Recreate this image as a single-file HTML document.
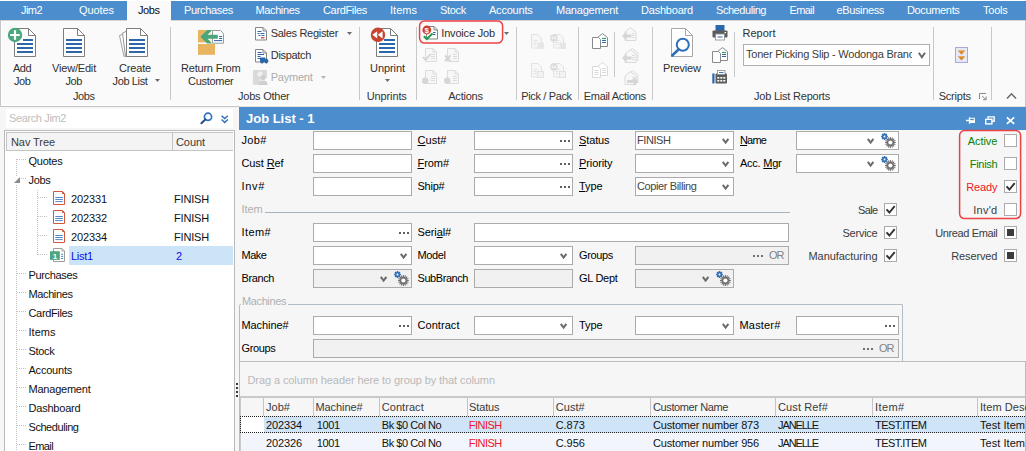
<!DOCTYPE html>
<html lang="en"><head><meta charset="utf-8"><title>Jim2 - Job List</title>
<style>
html,body{margin:0;padding:0}
body{width:1026px;height:451px;overflow:hidden;position:relative;background:#f6f6f6;font-family:"Liberation Sans",sans-serif;font-size:11px;color:#1e1e1e}
div,svg,span.t{position:absolute}
span.t{white-space:pre;line-height:14px;height:14px}
svg{overflow:visible}
</style></head>
<body>
<div style="left:0px;top:0px;width:1026px;height:1px;background:#ffffff;"></div>
<div style="left:0px;top:1px;width:1026px;height:19px;background:#4b8dcd;"></div>
<div style="left:127px;top:1px;width:44px;height:20px;background:#fafafa;"></div>
<div style="left:0px;top:20px;width:1026px;height:86px;background:#fafafa;"></div>
<div style="left:0px;top:20px;width:127px;height:1px;background:#d4d4d4;"></div>
<div style="left:171px;top:20px;width:855px;height:1px;background:#d4d4d4;"></div>
<div style="left:0px;top:105px;width:1026px;height:1px;background:#ffffff;"></div>
<div style="left:0px;top:106px;width:239px;height:1px;background:#c4c4c4;"></div>
<div style="left:239px;top:106px;width:787px;height:1px;background:#e4e0dc;"></div>
<div style="left:0px;top:20px;width:1px;height:87px;background:#c6c6c6;"></div>
<div style="left:1px;top:21px;width:1px;height:84px;background:#ffffff;"></div>
<div style="left:1025px;top:20px;width:1px;height:87px;background:#c6c6c6;"></div>
<div style="left:170px;top:27px;width:1px;height:73px;background:#c8c8c8;"></div>
<div style="left:359px;top:27px;width:1px;height:73px;background:#c8c8c8;"></div>
<div style="left:416px;top:27px;width:1px;height:73px;background:#c8c8c8;"></div>
<div style="left:516px;top:27px;width:1px;height:73px;background:#c8c8c8;"></div>
<div style="left:578px;top:27px;width:1px;height:73px;background:#c8c8c8;"></div>
<div style="left:652px;top:27px;width:1px;height:73px;background:#c8c8c8;"></div>
<div style="left:933px;top:27px;width:1px;height:73px;background:#c8c8c8;"></div>
<div style="left:991px;top:27px;width:1px;height:73px;background:#c8c8c8;"></div>
<div style="left:614px;top:32px;width:1px;height:45px;background:#c8c8c8;"></div>
<div style="left:734px;top:32px;width:1px;height:45px;background:#c8c8c8;"></div>
<svg style="left:155px;top:79px" width="5" height="3" viewBox="0 0 5 3"><path d="M0 0h5L2.5 3z" fill="#6a6a6a"/></svg>
<svg style="left:347px;top:31.5px" width="5" height="3" viewBox="0 0 5 3"><path d="M0 0h5L2.5 3z" fill="#6a6a6a"/></svg>
<svg style="left:321px;top:75.5px" width="5" height="3" viewBox="0 0 5 3"><path d="M0 0h5L2.5 3z" fill="#b5b5b5"/></svg>
<svg style="left:385px;top:79px" width="5" height="3" viewBox="0 0 5 3"><path d="M0 0h5L2.5 3z" fill="#6a6a6a"/></svg>
<svg style="left:504px;top:31.5px" width="5" height="3" viewBox="0 0 5 3"><path d="M0 0h5L2.5 3z" fill="#6a6a6a"/></svg>
<svg style="left:419px;top:20px" width="84" height="24" viewBox="0 0 84 24"><rect x="0.6" y="0.9" width="83" height="22.2" rx="5" fill="none" stroke="#ec4246" stroke-width="1.5"/></svg>
<div style="left:743px;top:44px;width:187px;height:22px;background:#ffffff;border:1px solid #b0b0b0;box-sizing:border-box;"></div>
<svg style="left:917.6px;top:51.8px" width="8" height="7" viewBox="0 0 8 7"><path d="M0.8 0.8L3.9 5.3L7 0.8" fill="none" stroke="#6b6b6b" stroke-width="2"/></svg>
<svg style="left:1006px;top:92px" width="11" height="8" viewBox="0 0 11 8"><path d="M1 6.5L5.5 1.8L10 6.5" fill="none" stroke="#6b6b6b" stroke-width="1.6"/></svg>
<svg style="left:979px;top:93px" width="8" height="7" viewBox="0 0 8 7"><path d="M0.5 6V0.5H7" fill="none" stroke="#8a8a8a"/><path d="M3 3l4 3.5M7.2 3.5v3.2h-3.2" fill="none" stroke="#8a8a8a"/></svg>
<svg style="left:14px;top:28px" width="22" height="29" viewBox="0 0 22 29"><path d="M0.5 0.5H14.5L21.5 7.5V28.5H0.5z" fill="#fff" stroke="#7d7d7d"/><path d="M14.5 0.5V7.5H21.5" fill="none" stroke="#7d7d7d"/><rect x="9" y="11" width="10" height="2" fill="#2c66ab"/><rect x="3" y="15" width="16" height="2" fill="#2c66ab"/><rect x="3" y="19" width="16" height="2" fill="#2c66ab"/><rect x="3" y="23" width="16" height="2" fill="#2c66ab"/><circle cx="1" cy="7" r="7.2" fill="#4aa67c"/><path d="M1 2.2V11.8M-3.8 7H5.8" stroke="#fff" stroke-width="2.2"/></svg>
<svg style="left:63px;top:28px" width="22" height="29" viewBox="0 0 22 29"><path d="M0.5 0.5H14.5L21.5 7.5V28.5H0.5z" fill="#fff" stroke="#7d7d7d"/><path d="M14.5 0.5V7.5H21.5" fill="none" stroke="#7d7d7d"/><rect x="3" y="11" width="16" height="2" fill="#2c66ab"/><rect x="3" y="15" width="16" height="2" fill="#2c66ab"/><rect x="3" y="19" width="16" height="2" fill="#2c66ab"/><rect x="3" y="23" width="16" height="2" fill="#2c66ab"/></svg>
<svg style="left:118px;top:28px" width="12" height="29" viewBox="0 0 12 29"><path d="M1.5 7.5L8 5.5V27.5L6 28.5z" fill="#fff" stroke="#a2a2a2"/><path d="M4.5 5L9 3V28.5L7.5 28.5z" fill="#fff" stroke="#969696"/></svg>
<svg style="left:126px;top:28px" width="22" height="29" viewBox="0 0 22 29"><path d="M0.5 0.5H14.5L21.5 7.5V28.5H0.5z" fill="#fff" stroke="#7d7d7d"/><path d="M14.5 0.5V7.5H21.5" fill="none" stroke="#7d7d7d"/><rect x="3" y="11" width="16" height="2" fill="#2c66ab"/><rect x="3" y="15" width="16" height="2" fill="#2c66ab"/><rect x="3" y="19" width="16" height="2" fill="#2c66ab"/><rect x="3" y="23" width="16" height="2" fill="#2c66ab"/></svg>
<svg style="left:198px;top:30px" width="26" height="25" viewBox="0 0 26 25"><rect x="0" y="0" width="17" height="12.4" fill="#e9b45f"/><rect x="0" y="14" width="17" height="10.8" fill="#e9b45f"/><path d="M14 0H17V13H14L9.5 8.8V4.8z" fill="#fff"/><rect x="12.2" y="3.2" width="0.9" height="0.9" fill="#e9b45f"/><rect x="12.2" y="9.6" width="0.9" height="0.9" fill="#e9b45f"/><path d="M14.5 0.5H22.5L25.5 3.5V13.2H14.5z" fill="#fff" stroke="#9a9a9a"/><path d="M21.2 6.5h3M21.2 8.5h3M16 10.6h8.2" stroke="#2c66ab" stroke-width="1"/><path d="M2.4 6.7L9.2 0H14L9.5 4.8H19.8V8.8H9.5L14 13.6H9.2z" fill="#4aa67c"/></svg>
<svg style="left:255px;top:26.5px" width="12" height="14" viewBox="0 0 12 14"><path d="M0.5 0.5H8L11.5 4V13H0.5z" fill="#fff" stroke="#858585"/><path d="M8 0.5V4H11.5" fill="none" stroke="#858585"/><path d="M2.5 4.5h4M2.5 6.5h2M5.5 6.5h4M3.5 8.5h2M6.5 8.5h3" stroke="#2c66ab" stroke-width="1.2"/><path d="M6 10.8h3.5" stroke="#d8402a" stroke-width="1.3"/></svg>
<svg style="left:255px;top:48.5px" width="14" height="15" viewBox="0 0 14 15"><path d="M0.5 0.5H8L11.5 4V13H0.5z" fill="#fff" stroke="#858585"/><path d="M8 0.5V4H11.5" fill="none" stroke="#858585"/><path d="M2.5 3.5h4M2.5 5.5h6.5M2.5 7.5h3M2.5 9.5h2.5" stroke="#2c66ab" stroke-width="1.2"/><path d="M5 8.4H10.3V9.7H12.2L13.3 11.2V13H5z" fill="#2c66ab"/><circle cx="7" cy="13.2" r="1.4" fill="#2c66ab"/><circle cx="11.3" cy="13.2" r="1.4" fill="#2c66ab"/></svg>
<svg style="left:252px;top:69px" width="16" height="16" viewBox="0 0 16 16"><rect x="1" y="1" width="14" height="8" rx="1" fill="#d9d9d9"/><circle cx="8" cy="5" r="2.6" fill="#f0f0f0"/><ellipse cx="4.5" cy="10" rx="4" ry="1.4" fill="#d9d9d9"/><ellipse cx="4.5" cy="12.2" rx="4" ry="1.4" fill="#d9d9d9"/><ellipse cx="4.5" cy="14.4" rx="4" ry="1.4" fill="#d9d9d9"/><circle cx="11" cy="8.5" r="2.6" fill="#cfcfcf"/><path d="M6.5 16C6.5 12.5 8.5 11.5 11 11.5S15.5 12.5 15.5 16z" fill="#cfcfcf"/></svg>
<svg style="left:376px;top:28px" width="22" height="29" viewBox="0 0 22 29"><path d="M0.5 0.5H14.5L21.5 7.5V28.5H0.5z" fill="#fff" stroke="#7d7d7d"/><path d="M14.5 0.5V7.5H21.5" fill="none" stroke="#7d7d7d"/><rect x="8" y="11" width="11" height="2" fill="#2c66ab"/><rect x="3" y="15" width="16" height="2" fill="#2c66ab"/><rect x="3" y="19" width="16" height="2" fill="#2c66ab"/><rect x="3" y="23" width="16" height="2" fill="#2c66ab"/><circle cx="2" cy="6.8" r="7.2" fill="#c8442c"/><path d="M1.2 3.2V10.4L-3.6 6.8zM6.6 3.2V10.4L1.8 6.8z" fill="#fff"/></svg>
<svg style="left:423px;top:26px" width="15" height="14" viewBox="0 0 15 14"><g transform="translate(3,0)"><path d="M0.5 0.5H8L11.5 4V13H0.5z" fill="#fff" stroke="#858585"/><path d="M8 0.5V4H11.5" fill="none" stroke="#858585"/><path d="M7 6.5h2.5M7 8.5h2.5" stroke="#2c66ab" stroke-width="1.1"/></g><circle cx="3.8" cy="4" r="4.4" fill="#d23c2a"/><text x="3.8" y="7" font-size="8" font-weight="bold" fill="#fff" text-anchor="middle" font-family="Liberation Sans,sans-serif">$</text><path d="M0.8 10.2L3.8 13L9.6 7.4" fill="none" stroke="#1f9a4a" stroke-width="2"/></svg>
<svg style="left:422px;top:48px" width="15" height="14" viewBox="0 0 15 14"><g transform="translate(3,0)"><path d="M0.5 0.5H8L11.5 4V13.5H0.5z" fill="#f7f7f7" stroke="#dcdcdc"/><path d="M8 0.5V4H11.5" fill="none" stroke="#dcdcdc"/><path d="M6 6.5h4M6 8.5h4M6 10.5h4" stroke="#dcdcdc"/></g><path d="M0.8 9L3.6 12L8.6 6" fill="none" stroke="#d4d4d4" stroke-width="1.8"/></svg>
<svg style="left:444px;top:48px" width="15" height="14" viewBox="0 0 15 14"><g transform="translate(3,0)"><path d="M0.5 0.5H8L11.5 4V13.5H0.5z" fill="#f7f7f7" stroke="#dcdcdc"/><path d="M8 0.5V4H11.5" fill="none" stroke="#dcdcdc"/><path d="M6 6.5h4M6 8.5h4M6 10.5h4" stroke="#dcdcdc"/></g><path d="M1 7.5L6.5 13M6.5 7.5L1 13" fill="none" stroke="#d4d4d4" stroke-width="1.8"/></svg>
<svg style="left:422px;top:70px" width="15" height="14" viewBox="0 0 15 14"><g transform="translate(3,0)"><path d="M0.5 0.5H8L11.5 4V13.5H0.5z" fill="#f7f7f7" stroke="#dcdcdc"/><path d="M8 0.5V4H11.5" fill="none" stroke="#dcdcdc"/><path d="M6 6.5h4M6 8.5h4M6 10.5h4" stroke="#dcdcdc"/></g><circle cx="3.2" cy="10.8" r="3.2" fill="#d6d6d6"/></svg>
<svg style="left:444px;top:70px" width="15" height="14" viewBox="0 0 15 14"><g transform="translate(3,0)"><path d="M0.5 0.5H8L11.5 4V13.5H0.5z" fill="#f7f7f7" stroke="#dcdcdc"/><path d="M8 0.5V4H11.5" fill="none" stroke="#dcdcdc"/><path d="M6 6.5h4M6 8.5h4M6 10.5h4" stroke="#dcdcdc"/></g><circle cx="3.2" cy="10.8" r="3.2" fill="#d6d6d6"/></svg>
<svg style="left:531px;top:34px" width="16" height="15" viewBox="0 0 16 15"><g transform="translate(0,0)"><path d="M0.5 0.5H7L10.5 4V14H0.5z" fill="#f7f7f7" stroke="#e2e2e2"/><path d="M2.5 6.5h4M2.5 8.5h3M2.5 10.5h3" stroke="#e2e2e2"/><rect x="6.5" y="8.5" width="6.5" height="6.5" fill="#e6e6e6"/></g></svg>
<svg style="left:550px;top:34px" width="16" height="15" viewBox="0 0 16 15"><g transform="translate(3,0)"><path d="M0.5 0.5H7L10.5 4V14H0.5z" fill="#f7f7f7" stroke="#e2e2e2"/><path d="M2.5 6.5h4M2.5 8.5h3M2.5 10.5h3" stroke="#e2e2e2"/><rect x="6.5" y="8.5" width="6.5" height="6.5" fill="#e6e6e6"/></g><circle cx="3.8" cy="4" r="3.8" fill="#dcdcdc"/><path d="M3.2 2.2V5.8L1 4zM6 2.2V5.8L3.8 4z" fill="#f7f7f7"/></svg>
<svg style="left:531px;top:63px" width="16" height="15" viewBox="0 0 16 15"><g transform="translate(0,0)"><path d="M0.5 0.5H7L10.5 4V14H0.5z" fill="#f7f7f7" stroke="#e2e2e2"/><path d="M2.5 6.5h4M2.5 8.5h3M2.5 10.5h3" stroke="#e2e2e2"/><rect x="6.5" y="8.5" width="6" height="6" fill="#f2f2f2" stroke="#e2e2e2"/></g></svg>
<svg style="left:550px;top:63px" width="16" height="15" viewBox="0 0 16 15"><g transform="translate(3,0)"><path d="M0.5 0.5H7L10.5 4V14H0.5z" fill="#f7f7f7" stroke="#e2e2e2"/><path d="M2.5 6.5h4M2.5 8.5h3M2.5 10.5h3" stroke="#e2e2e2"/><rect x="6.5" y="8.5" width="6" height="6" fill="#f2f2f2" stroke="#e2e2e2"/></g><circle cx="3.8" cy="4" r="3.8" fill="#dcdcdc"/><path d="M3.2 2.2V5.8L1 4zM6 2.2V5.8L3.8 4z" fill="#f7f7f7"/></svg>
<svg style="left:592px;top:33px" width="16" height="16" viewBox="0 0 16 16"><path d="M5.5 4.5L10.5 0.6L15.5 4.5V13.5H5.5z" fill="#fff" stroke="#8a8a8a"/><path d="M10 5.5h4" stroke="#2e9e6b" stroke-width="1.2"/><path d="M10 7.5h4M10 9.5h4" stroke="#2c66ab" stroke-width="1.2"/><path d="M0.5 4.5H6.5L8.5 6.5V15.5H0.5z" fill="#fff" stroke="#8a8a8a"/></svg>
<svg style="left:592px;top:62px" width="16" height="16" viewBox="0 0 16 16"><path d="M5.5 4.5L10.5 0.6L15.5 4.5V13.5H5.5z" fill="#fff" stroke="#dadada"/><path d="M10 6.5h4M10 8.5h4M10 10.5h4" stroke="#dadada"/><path d="M0.5 4.5H6.5L8.5 6.5V15.5H0.5z" fill="#fff" stroke="#dadada"/><path d="M2.5 8.5h4M2.5 10.5h4M2.5 12.5h4" stroke="#dadada"/></svg>
<svg style="left:622px;top:27px" width="17" height="15" viewBox="0 0 17 15"><path d="M3 5L8.5 0.7L14 5V13.5H3z" fill="#f8f8f8" stroke="#dadada"/><path d="M10 6.5h2.5M10 8.5h2.5M10 10.5h2.5" stroke="#dadada"/><path d="M0 9L4.6 4.6V7.5H9.5V10.5H4.6V13.4z" fill="#d6d6d6"/></svg>
<svg style="left:622px;top:48.5px" width="17" height="15" viewBox="0 0 17 15"><path d="M6 2.5L10.5 -0.5L15.8 3.8V12" fill="none" stroke="#dadada"/><path d="M3 5L8.5 0.7L14 5V13.5H3z" fill="#f8f8f8" stroke="#dadada"/><path d="M10 6.5h2.5M10 8.5h2.5M10 10.5h2.5" stroke="#dadada"/><path d="M0 9L4.6 4.6V7.5H9.5V10.5H4.6V13.4z" fill="#d6d6d6"/></svg>
<svg style="left:622px;top:70.5px" width="17" height="15" viewBox="0 0 17 15"><path d="M6 2.5L10.5 -0.5L15.8 3.8V12" fill="none" stroke="#dadada"/><path d="M3 5L8.5 0.7L14 5V13.5H3z" fill="#f8f8f8" stroke="#dadada"/><path d="M10 6.5h2.5M10 8.5h2.5M10 10.5h2.5" stroke="#dadada"/><path d="M16.5 10.5L11.9 6.1V9H5V12H11.9V14.9z" fill="#d6d6d6"/></svg>
<svg style="left:671px;top:28px" width="22" height="29" viewBox="0 0 22 29"><path d="M0.5 0.5H14.5L21.5 7.5V28.5H0.5z" fill="#fff" stroke="#a8a8a8"/><path d="M14.5 0.5V7.5H21.5" fill="none" stroke="#a8a8a8"/><circle cx="11.8" cy="16.8" r="6" fill="#fff" stroke="#2f6fb7" stroke-width="2"/><path d="M7.5 21.5L1.2 27.5" stroke="#2f6fb7" stroke-width="2.6" stroke-linecap="round"/></svg>
<svg style="left:712px;top:25px" width="16" height="15" viewBox="0 0 16 15"><rect x="3.5" y="0" width="9" height="6" fill="#2c66ab"/><rect x="0.5" y="5.5" width="15" height="7" rx="1" fill="#5b5b5b"/><rect x="3.5" y="9" width="9" height="6" fill="#fff" stroke="#8a8a8a" stroke-width="0.8"/><path d="M5.5 12h5" stroke="#2c66ab"/><rect x="12.5" y="7" width="1.5" height="1.2" fill="#fff"/></svg>
<svg style="left:712px;top:47px" width="16" height="16" viewBox="0 0 16 16"><path d="M5.5 4.5L10.5 0.6L15.5 4.5V13.5H5.5z" fill="#fff" stroke="#8a8a8a"/><path d="M10 5.5h4" stroke="#2e9e6b" stroke-width="1.2"/><path d="M10 7.5h4M10 9.5h4" stroke="#2c66ab" stroke-width="1.2"/><path d="M0.5 4.5H6.5L8.5 6.5V15.5H0.5z" fill="#fff" stroke="#8a8a8a"/></svg>
<svg style="left:712px;top:70px" width="16" height="14" viewBox="0 0 16 14"><rect x="0.3" y="3.5" width="2.2" height="10" fill="#2c66ab"/><rect x="3.5" y="3.5" width="11.5" height="10" rx="1" fill="#5b5b5b"/><rect x="5.5" y="0.5" width="7.5" height="4" fill="#fff" stroke="#8a8a8a" stroke-width="0.8"/><path d="M7 2.5h4.5" stroke="#2c66ab" stroke-width="0.9"/><rect x="5.3" y="7" width="2" height="1.6" fill="#fff"/><rect x="8.3" y="7" width="2" height="1.6" fill="#fff"/><rect x="11.3" y="7" width="2" height="1.6" fill="#fff"/><rect x="5.3" y="10" width="2" height="1.6" fill="#fff"/><rect x="8.3" y="10" width="2" height="1.6" fill="#fff"/><rect x="11.3" y="10" width="2" height="1.6" fill="#fff"/></svg>
<svg style="left:955px;top:47px" width="13" height="16" viewBox="0 0 13 16"><rect x="0.5" y="0.5" width="12" height="15" fill="#e6e9f7" stroke="#a8a8da"/><path d="M2.8 3.4H10.2L6.5 7.8zM2.8 9.2H10.2L6.5 13.6z" fill="#dd841c"/><path d="M3.6 3.9H9.4" stroke="#f0b060" stroke-width="0.9"/><path d="M3.6 9.7H9.4" stroke="#f0b060" stroke-width="0.9"/></svg>
<div style="left:6px;top:109px;width:227px;height:19px;background:#ffffff;"></div>
<svg style="left:200px;top:111px" width="14" height="14" viewBox="0 0 14 14"><circle cx="8" cy="5.8" r="3.6" fill="none" stroke="#3173c0" stroke-width="1.7"/><path d="M5.4 8.4L1.4 12.3" stroke="#1f4a8c" stroke-width="2" stroke-linecap="round"/></svg>
<svg style="left:221px;top:114.6px" width="8" height="9" viewBox="0 0 8 9"><path d="M0.6 0.7L3.7 3.6L6.8 0.7M0.6 4.6L3.7 7.5L6.8 4.6" fill="none" stroke="#2e6db5" stroke-width="1.4"/></svg>
<div style="left:4px;top:130px;width:231px;height:330px;background:#ffffff;border:1px solid #b9b9b9;box-sizing:border-box;"></div>
<div style="left:6px;top:132px;width:227px;height:19px;background:#f4f4f4;border:1px solid #c4c4c4;box-sizing:border-box;border-right:none;"></div>
<div style="left:172px;top:132px;width:1px;height:19px;background:#c4c4c4;"></div>
<div style="left:69px;top:246px;width:164px;height:19px;background:#cce4f7;"></div>
<div style="left:16px;top:159px;width:1px;height:300px;background:repeating-linear-gradient(180deg,#c2c2c2 0 1px,transparent 1px 2px);"></div>
<div style="left:37px;top:190px;width:1px;height:65px;background:repeating-linear-gradient(180deg,#c2c2c2 0 1px,transparent 1px 2px);"></div>
<div style="left:17px;top:159px;width:10px;height:1px;background:repeating-linear-gradient(90deg,#c2c2c2 0 1px,transparent 1px 2px);"></div>
<div style="left:17px;top:178px;width:10px;height:1px;background:repeating-linear-gradient(90deg,#c2c2c2 0 1px,transparent 1px 2px);"></div>
<div style="left:17px;top:273px;width:10px;height:1px;background:repeating-linear-gradient(90deg,#c2c2c2 0 1px,transparent 1px 2px);"></div>
<div style="left:17px;top:292px;width:10px;height:1px;background:repeating-linear-gradient(90deg,#c2c2c2 0 1px,transparent 1px 2px);"></div>
<div style="left:17px;top:311px;width:10px;height:1px;background:repeating-linear-gradient(90deg,#c2c2c2 0 1px,transparent 1px 2px);"></div>
<div style="left:17px;top:330px;width:10px;height:1px;background:repeating-linear-gradient(90deg,#c2c2c2 0 1px,transparent 1px 2px);"></div>
<div style="left:17px;top:349px;width:10px;height:1px;background:repeating-linear-gradient(90deg,#c2c2c2 0 1px,transparent 1px 2px);"></div>
<div style="left:17px;top:368px;width:10px;height:1px;background:repeating-linear-gradient(90deg,#c2c2c2 0 1px,transparent 1px 2px);"></div>
<div style="left:17px;top:387px;width:10px;height:1px;background:repeating-linear-gradient(90deg,#c2c2c2 0 1px,transparent 1px 2px);"></div>
<div style="left:17px;top:406px;width:10px;height:1px;background:repeating-linear-gradient(90deg,#c2c2c2 0 1px,transparent 1px 2px);"></div>
<div style="left:17px;top:425px;width:10px;height:1px;background:repeating-linear-gradient(90deg,#c2c2c2 0 1px,transparent 1px 2px);"></div>
<div style="left:17px;top:444px;width:10px;height:1px;background:repeating-linear-gradient(90deg,#c2c2c2 0 1px,transparent 1px 2px);"></div>
<div style="left:13px;top:176px;width:8px;height:8px;background:#ffffff;"></div>
<svg style="left:14px;top:177px" width="6" height="6" viewBox="0 0 6 6"><path d="M6 0V6H0z" fill="#8a8a8a"/></svg>
<div style="left:38px;top:197px;width:9px;height:1px;background:repeating-linear-gradient(90deg,#c2c2c2 0 1px,transparent 1px 2px);"></div>
<svg style="left:53px;top:191px" width="12" height="14" viewBox="0 0 12 14"><path d="M0.5 0.5H9.5L11.5 2.5V13.5H0.5z" fill="#fff" stroke="#d2573d" stroke-width="1"/><path d="M9.5 0.5V2.5H11.5" fill="none" stroke="#d2573d" stroke-width="1"/><path d="M2.3 6.5h7.5M2.3 8.5h7.5M2.3 10.6h7.5" stroke="#5288c8" stroke-width="1"/></svg>
<div style="left:38px;top:216px;width:9px;height:1px;background:repeating-linear-gradient(90deg,#c2c2c2 0 1px,transparent 1px 2px);"></div>
<svg style="left:53px;top:210px" width="12" height="14" viewBox="0 0 12 14"><path d="M0.5 0.5H9.5L11.5 2.5V13.5H0.5z" fill="#fff" stroke="#d2573d" stroke-width="1"/><path d="M9.5 0.5V2.5H11.5" fill="none" stroke="#d2573d" stroke-width="1"/><path d="M2.3 6.5h7.5M2.3 8.5h7.5M2.3 10.6h7.5" stroke="#5288c8" stroke-width="1"/></svg>
<div style="left:38px;top:235px;width:9px;height:1px;background:repeating-linear-gradient(90deg,#c2c2c2 0 1px,transparent 1px 2px);"></div>
<svg style="left:53px;top:229px" width="12" height="14" viewBox="0 0 12 14"><path d="M0.5 0.5H9.5L11.5 2.5V13.5H0.5z" fill="#fff" stroke="#d2573d" stroke-width="1"/><path d="M9.5 0.5V2.5H11.5" fill="none" stroke="#d2573d" stroke-width="1"/><path d="M2.3 6.5h7.5M2.3 8.5h7.5M2.3 10.6h7.5" stroke="#5288c8" stroke-width="1"/></svg>
<div style="left:38px;top:254px;width:9px;height:1px;background:repeating-linear-gradient(90deg,#c2c2c2 0 1px,transparent 1px 2px);"></div>
<svg style="left:50px;top:248px" width="16" height="14" viewBox="0 0 16 14"><path d="M3.5 0.5H12L14.5 3V13.5H3.5z" fill="#fff" stroke="#9c9c9c" stroke-width="1"/><path d="M12 0.5V3H14.5" fill="none" stroke="#9c9c9c" stroke-width="0.8"/><path d="M11.2 6.3h1.9M11.2 8.4h1.9M11.2 10.5h1.9" stroke="#3f7fbf"/><rect x="0" y="3.2" width="9.8" height="8.7" fill="#4ea67e"/><text x="4.9" y="10.5" font-size="8" font-weight="bold" fill="#fff" text-anchor="middle" font-family="Liberation Sans,sans-serif">1</text></svg>
<div style="left:236px;top:383px;width:2px;height:2px;background:#3a3a3a;"></div>
<div style="left:236px;top:387px;width:2px;height:2px;background:#3a3a3a;"></div>
<div style="left:236px;top:391px;width:2px;height:2px;background:#3a3a3a;"></div>
<div style="left:236px;top:395px;width:2px;height:2px;background:#3a3a3a;"></div>
<div style="left:239px;top:107px;width:787px;height:23px;background:#4b8dcd;"></div>
<svg style="left:966px;top:117px" width="9" height="7" viewBox="0 0 9 7"><path d="M0 3.5h3M3.5 0.3v6.4" fill="none" stroke="#fff" stroke-width="1.3"/><path d="M3.5 1.2h4.8v4.2h-4.8" fill="none" stroke="#fff" stroke-width="1.1"/><rect x="3.5" y="3.2" width="5.3" height="2.7" fill="#fff"/></svg>
<svg style="left:985px;top:116px" width="10" height="9" viewBox="0 0 10 9"><path d="M3 2.6V0.9h6.2V5.2H7.2" fill="none" stroke="#fff" stroke-width="1.4"/><rect x="0.7" y="3.3" width="6.2" height="4.6" fill="none" stroke="#fff" stroke-width="1.4"/></svg>
<svg style="left:1006px;top:117px" width="9" height="7" viewBox="0 0 9 7"><path d="M0.8 0.3L8.2 6.9M8.2 0.3L0.8 6.9" stroke="#fff" stroke-width="1.7"/></svg>
<div style="left:313px;top:131px;width:99px;height:19px;background:#ffffff;border:1px solid #ababab;box-sizing:border-box;"></div>
<div style="left:313px;top:154px;width:99px;height:19px;background:#ffffff;border:1px solid #ababab;box-sizing:border-box;"></div>
<div style="left:313px;top:177px;width:99px;height:19px;background:#ffffff;border:1px solid #ababab;box-sizing:border-box;"></div>
<div style="left:474px;top:131px;width:99px;height:19px;background:#ffffff;border:1px solid #ababab;box-sizing:border-box;"></div>
<div style="left:559.5px;top:139.5px;width:2px;height:2px;background:#5f5f5f;"></div>
<div style="left:563.5px;top:139.5px;width:2px;height:2px;background:#5f5f5f;"></div>
<div style="left:567.5px;top:139.5px;width:2px;height:2px;background:#5f5f5f;"></div>
<div style="left:474px;top:154px;width:99px;height:19px;background:#ffffff;border:1px solid #ababab;box-sizing:border-box;"></div>
<div style="left:559.5px;top:162.5px;width:2px;height:2px;background:#5f5f5f;"></div>
<div style="left:563.5px;top:162.5px;width:2px;height:2px;background:#5f5f5f;"></div>
<div style="left:567.5px;top:162.5px;width:2px;height:2px;background:#5f5f5f;"></div>
<div style="left:474px;top:177px;width:99px;height:19px;background:#ffffff;border:1px solid #ababab;box-sizing:border-box;"></div>
<div style="left:559.5px;top:185.5px;width:2px;height:2px;background:#5f5f5f;"></div>
<div style="left:563.5px;top:185.5px;width:2px;height:2px;background:#5f5f5f;"></div>
<div style="left:567.5px;top:185.5px;width:2px;height:2px;background:#5f5f5f;"></div>
<div style="left:635px;top:131px;width:99px;height:19px;background:#ffffff;border:1px solid #ababab;box-sizing:border-box;"></div>
<svg style="left:722px;top:138px" width="8" height="6" viewBox="0 0 8 6"><path d="M0.8 0.8L3.6 4.6L6.4 0.8" fill="none" stroke="#6b6b6b" stroke-width="2"/></svg>
<div style="left:635px;top:154px;width:99px;height:19px;background:#ffffff;border:1px solid #ababab;box-sizing:border-box;"></div>
<svg style="left:722px;top:161px" width="8" height="6" viewBox="0 0 8 6"><path d="M0.8 0.8L3.6 4.6L6.4 0.8" fill="none" stroke="#6b6b6b" stroke-width="2"/></svg>
<div style="left:635px;top:177px;width:99px;height:19px;background:#ffffff;border:1px solid #ababab;box-sizing:border-box;"></div>
<svg style="left:722px;top:184px" width="8" height="6" viewBox="0 0 8 6"><path d="M0.8 0.8L3.6 4.6L6.4 0.8" fill="none" stroke="#6b6b6b" stroke-width="2"/></svg>
<div style="left:796px;top:131px;width:103px;height:19px;background:#ffffff;border:1px solid #ababab;box-sizing:border-box;"></div>
<svg style="left:867px;top:138px" width="8" height="6" viewBox="0 0 8 6"><path d="M0.8 0.8L3.6 4.6L6.4 0.8" fill="none" stroke="#6b6b6b" stroke-width="2"/></svg>
<svg style="left:881px;top:133px" width="16" height="15" viewBox="0 0 16 15"><g transform="translate(3.5,3.5)" stroke="#2f6fb7" stroke-width="1.6"><path d="M0-3.4V3.4M-3.4 0H3.4M-2.4-2.4L2.4 2.4M-2.4 2.4L2.4-2.4"/></g><circle cx="3.5" cy="3.5" r="2.2" fill="#2f6fb7"/><circle cx="3.5" cy="3.5" r="1" fill="#fff"/><g transform="translate(9.4,9.5)" stroke="#6f6f6f" stroke-width="1.5"><path d="M0-5.4V5.4M-5.4 0H5.4M-3.8-3.8L3.8 3.8M-3.8 3.8L3.8-3.8M-2.1-5L2.1 5M2.1-5L-2.1 5M-5-2.1L5 2.1M-5 2.1L5-2.1" stroke-width="1.1"/></g><circle cx="9.4" cy="9.5" r="3.6" fill="#6f6f6f"/><circle cx="9.4" cy="9.5" r="2.1" fill="#fff"/></svg>
<div style="left:796px;top:154px;width:103px;height:19px;background:#ffffff;border:1px solid #ababab;box-sizing:border-box;"></div>
<svg style="left:867px;top:161px" width="8" height="6" viewBox="0 0 8 6"><path d="M0.8 0.8L3.6 4.6L6.4 0.8" fill="none" stroke="#6b6b6b" stroke-width="2"/></svg>
<svg style="left:881px;top:156px" width="16" height="15" viewBox="0 0 16 15"><g transform="translate(3.5,3.5)" stroke="#2f6fb7" stroke-width="1.6"><path d="M0-3.4V3.4M-3.4 0H3.4M-2.4-2.4L2.4 2.4M-2.4 2.4L2.4-2.4"/></g><circle cx="3.5" cy="3.5" r="2.2" fill="#2f6fb7"/><circle cx="3.5" cy="3.5" r="1" fill="#fff"/><g transform="translate(9.4,9.5)" stroke="#6f6f6f" stroke-width="1.5"><path d="M0-5.4V5.4M-5.4 0H5.4M-3.8-3.8L3.8 3.8M-3.8 3.8L3.8-3.8M-2.1-5L2.1 5M2.1-5L-2.1 5M-5-2.1L5 2.1M-5 2.1L5-2.1" stroke-width="1.1"/></g><circle cx="9.4" cy="9.5" r="3.6" fill="#6f6f6f"/><circle cx="9.4" cy="9.5" r="2.1" fill="#fff"/></svg>
<div style="left:265px;top:212px;width:525px;height:1px;background:#a9b2bd;"></div>
<div style="left:313px;top:223px;width:99px;height:19px;background:#ffffff;border:1px solid #ababab;box-sizing:border-box;"></div>
<div style="left:398.5px;top:231.5px;width:2px;height:2px;background:#5f5f5f;"></div>
<div style="left:402.5px;top:231.5px;width:2px;height:2px;background:#5f5f5f;"></div>
<div style="left:406.5px;top:231.5px;width:2px;height:2px;background:#5f5f5f;"></div>
<div style="left:474px;top:223px;width:315px;height:19px;background:#ffffff;border:1px solid #ababab;box-sizing:border-box;"></div>
<div style="left:313px;top:246px;width:99px;height:19px;background:#ffffff;border:1px solid #ababab;box-sizing:border-box;"></div>
<svg style="left:400px;top:253px" width="8" height="6" viewBox="0 0 8 6"><path d="M0.8 0.8L3.6 4.6L6.4 0.8" fill="none" stroke="#6b6b6b" stroke-width="2"/></svg>
<div style="left:474px;top:246px;width:99px;height:19px;background:#ffffff;border:1px solid #ababab;box-sizing:border-box;"></div>
<svg style="left:560px;top:253px" width="8" height="6" viewBox="0 0 8 6"><path d="M0.8 0.8L3.6 4.6L6.4 0.8" fill="none" stroke="#6b6b6b" stroke-width="2"/></svg>
<div style="left:635px;top:246px;width:154px;height:19px;background:#f1f1f1;border:1px solid #ababab;box-sizing:border-box;"></div>
<div style="left:753px;top:254.5px;width:2px;height:2px;background:#6e6e6e;"></div>
<div style="left:757px;top:254.5px;width:2px;height:2px;background:#6e6e6e;"></div>
<div style="left:761px;top:254.5px;width:2px;height:2px;background:#6e6e6e;"></div>
<div style="left:313px;top:269px;width:99px;height:19px;background:#f1f1f1;border:1px solid #ababab;box-sizing:border-box;"></div>
<svg style="left:380px;top:276px" width="8" height="6" viewBox="0 0 8 6"><path d="M0.8 0.8L3.6 4.6L6.4 0.8" fill="none" stroke="#6b6b6b" stroke-width="2"/></svg>
<svg style="left:394px;top:271px" width="16" height="15" viewBox="0 0 16 15"><g transform="translate(3.5,3.5)" stroke="#2f6fb7" stroke-width="1.6"><path d="M0-3.4V3.4M-3.4 0H3.4M-2.4-2.4L2.4 2.4M-2.4 2.4L2.4-2.4"/></g><circle cx="3.5" cy="3.5" r="2.2" fill="#2f6fb7"/><circle cx="3.5" cy="3.5" r="1" fill="#fff"/><g transform="translate(9.4,9.5)" stroke="#6f6f6f" stroke-width="1.5"><path d="M0-5.4V5.4M-5.4 0H5.4M-3.8-3.8L3.8 3.8M-3.8 3.8L3.8-3.8M-2.1-5L2.1 5M2.1-5L-2.1 5M-5-2.1L5 2.1M-5 2.1L5-2.1" stroke-width="1.1"/></g><circle cx="9.4" cy="9.5" r="3.6" fill="#6f6f6f"/><circle cx="9.4" cy="9.5" r="2.1" fill="#fff"/></svg>
<div style="left:474px;top:269px;width:99px;height:19px;background:#f1f1f1;border:1px solid #ababab;box-sizing:border-box;"></div>
<div style="left:635px;top:269px;width:99px;height:19px;background:#f1f1f1;border:1px solid #ababab;box-sizing:border-box;"></div>
<svg style="left:702px;top:276px" width="8" height="6" viewBox="0 0 8 6"><path d="M0.8 0.8L3.6 4.6L6.4 0.8" fill="none" stroke="#6b6b6b" stroke-width="2"/></svg>
<svg style="left:716px;top:271px" width="16" height="15" viewBox="0 0 16 15"><g transform="translate(3.5,3.5)" stroke="#2f6fb7" stroke-width="1.6"><path d="M0-3.4V3.4M-3.4 0H3.4M-2.4-2.4L2.4 2.4M-2.4 2.4L2.4-2.4"/></g><circle cx="3.5" cy="3.5" r="2.2" fill="#2f6fb7"/><circle cx="3.5" cy="3.5" r="1" fill="#fff"/><g transform="translate(9.4,9.5)" stroke="#6f6f6f" stroke-width="1.5"><path d="M0-5.4V5.4M-5.4 0H5.4M-3.8-3.8L3.8 3.8M-3.8 3.8L3.8-3.8M-2.1-5L2.1 5M2.1-5L-2.1 5M-5-2.1L5 2.1M-5 2.1L5-2.1" stroke-width="1.1"/></g><circle cx="9.4" cy="9.5" r="3.6" fill="#6f6f6f"/><circle cx="9.4" cy="9.5" r="2.1" fill="#fff"/></svg>
<div style="left:884px;top:203px;width:13px;height:13px;background:#ffffff;border:1px solid #ababab;box-sizing:border-box;"></div>
<svg style="left:884px;top:203px" width="13" height="13" viewBox="0 0 13 13"><path d="M2.5 6.3L5.4 9.5L10.7 3.1" fill="none" stroke="#333333" stroke-width="1.9"/></svg>
<div style="left:884px;top:226px;width:13px;height:13px;background:#ffffff;border:1px solid #ababab;box-sizing:border-box;"></div>
<svg style="left:884px;top:226px" width="13" height="13" viewBox="0 0 13 13"><path d="M2.5 6.3L5.4 9.5L10.7 3.1" fill="none" stroke="#333333" stroke-width="1.9"/></svg>
<div style="left:884px;top:249px;width:13px;height:13px;background:#ffffff;border:1px solid #ababab;box-sizing:border-box;"></div>
<svg style="left:884px;top:249px" width="13" height="13" viewBox="0 0 13 13"><path d="M2.5 6.3L5.4 9.5L10.7 3.1" fill="none" stroke="#333333" stroke-width="1.9"/></svg>
<svg style="left:959px;top:130px" width="62" height="89" viewBox="0 0 62 89"><rect x="0.6" y="0.6" width="61" height="88" rx="5" fill="none" stroke="#ec4246" stroke-width="1.5"/></svg>
<div style="left:1004px;top:134px;width:13px;height:13px;background:#ffffff;border:1px solid #ababab;box-sizing:border-box;"></div>
<div style="left:1004px;top:157px;width:13px;height:13px;background:#ffffff;border:1px solid #ababab;box-sizing:border-box;"></div>
<div style="left:1004px;top:180px;width:13px;height:13px;background:#ffffff;border:1px solid #ababab;box-sizing:border-box;"></div>
<svg style="left:1004px;top:180px" width="13" height="13" viewBox="0 0 13 13"><path d="M2.5 6.3L5.4 9.5L10.7 3.1" fill="none" stroke="#333333" stroke-width="1.9"/></svg>
<div style="left:1004px;top:203px;width:13px;height:13px;background:#ffffff;border:1px solid #ababab;box-sizing:border-box;"></div>
<div style="left:1004px;top:226px;width:13px;height:13px;background:#ffffff;border:1px solid #ababab;box-sizing:border-box;"></div>
<div style="left:1007px;top:229px;width:7px;height:7px;background:#3c3c3c;"></div>
<div style="left:1004px;top:249px;width:13px;height:13px;background:#ffffff;border:1px solid #ababab;box-sizing:border-box;"></div>
<div style="left:1007px;top:252px;width:7px;height:7px;background:#3c3c3c;"></div>
<div style="left:239px;top:304px;width:664px;height:58px;border:1px solid #b4bcc6;box-sizing:border-box;border-bottom:none;border-radius:2px 2px 0 0;"></div>
<div style="left:241px;top:296px;width:47px;height:12px;background:#f6f6f6;"></div>
<div style="left:313px;top:316px;width:99px;height:19px;background:#ffffff;border:1px solid #ababab;box-sizing:border-box;"></div>
<div style="left:398.5px;top:324.5px;width:2px;height:2px;background:#5f5f5f;"></div>
<div style="left:402.5px;top:324.5px;width:2px;height:2px;background:#5f5f5f;"></div>
<div style="left:406.5px;top:324.5px;width:2px;height:2px;background:#5f5f5f;"></div>
<div style="left:474px;top:316px;width:99px;height:19px;background:#ffffff;border:1px solid #ababab;box-sizing:border-box;"></div>
<svg style="left:560px;top:323px" width="8" height="6" viewBox="0 0 8 6"><path d="M0.8 0.8L3.6 4.6L6.4 0.8" fill="none" stroke="#6b6b6b" stroke-width="2"/></svg>
<div style="left:635px;top:316px;width:99px;height:19px;background:#ffffff;border:1px solid #ababab;box-sizing:border-box;"></div>
<svg style="left:722px;top:323px" width="8" height="6" viewBox="0 0 8 6"><path d="M0.8 0.8L3.6 4.6L6.4 0.8" fill="none" stroke="#6b6b6b" stroke-width="2"/></svg>
<div style="left:796px;top:316px;width:103px;height:19px;background:#ffffff;border:1px solid #ababab;box-sizing:border-box;"></div>
<div style="left:885px;top:324.5px;width:2px;height:2px;background:#5f5f5f;"></div>
<div style="left:889px;top:324.5px;width:2px;height:2px;background:#5f5f5f;"></div>
<div style="left:893px;top:324.5px;width:2px;height:2px;background:#5f5f5f;"></div>
<div style="left:313px;top:339px;width:586px;height:19px;background:#f1f1f1;border:1px solid #ababab;box-sizing:border-box;"></div>
<div style="left:863px;top:347.5px;width:2px;height:2px;background:#6e6e6e;"></div>
<div style="left:867px;top:347.5px;width:2px;height:2px;background:#6e6e6e;"></div>
<div style="left:871px;top:347.5px;width:2px;height:2px;background:#6e6e6e;"></div>
<div style="left:239px;top:361px;width:787px;height:92px;background:#f6f6f6;border:1px solid #bdbdbd;box-sizing:border-box;"></div>
<div style="left:240px;top:396px;width:1px;height:55px;background:#c9c9c9;"></div>
<div style="left:241px;top:396px;width:784px;height:2px;background:#c9c9c9;"></div>
<div style="left:241px;top:398px;width:784px;height:18px;background:#f6f6f6;"></div>
<div style="left:263px;top:398px;width:1px;height:18px;background:#c4c4c4;"></div>
<div style="left:313px;top:398px;width:1px;height:18px;background:#c4c4c4;"></div>
<div style="left:379px;top:398px;width:1px;height:18px;background:#c4c4c4;"></div>
<div style="left:467px;top:398px;width:1px;height:18px;background:#c4c4c4;"></div>
<div style="left:553px;top:398px;width:1px;height:18px;background:#c4c4c4;"></div>
<div style="left:650px;top:398px;width:1px;height:18px;background:#c4c4c4;"></div>
<div style="left:775px;top:398px;width:1px;height:18px;background:#c4c4c4;"></div>
<div style="left:872px;top:398px;width:1px;height:18px;background:#c4c4c4;"></div>
<div style="left:977px;top:398px;width:1px;height:18px;background:#c4c4c4;"></div>
<div style="left:241px;top:416px;width:23px;height:17px;background:#ffffff;"></div>
<div style="left:264px;top:416px;width:761px;height:17px;background:#cfe4f7;"></div>
<div style="left:241px;top:433px;width:784px;height:18px;background:#f2f5fb;"></div>
<div style="left:240px;top:416px;width:785px;height:1px;background:repeating-linear-gradient(90deg,#222222 0 1px,transparent 1px 2px);"></div>
<div style="left:240px;top:432px;width:785px;height:1px;background:repeating-linear-gradient(90deg,#222222 0 1px,transparent 1px 2px);"></div>
<div style="left:240px;top:416px;width:1px;height:17px;background:repeating-linear-gradient(180deg,#222222 0 1px,transparent 1px 2px);"></div>
<div style="left:1025px;top:361px;width:1px;height:90px;background:#bdbdbd;"></div>
<span class="t" style="left:21.00px;top:3.30px;letter-spacing:-0.559px;color:#ffffff;">Jim2</span>
<span class="t" style="left:79.00px;top:3.30px;letter-spacing:-0.078px;color:#ffffff;">Quotes</span>
<span class="t" style="left:184.00px;top:3.30px;letter-spacing:-0.332px;color:#ffffff;">Purchases</span>
<span class="t" style="left:255.50px;top:3.30px;letter-spacing:-0.385px;color:#ffffff;">Machines</span>
<span class="t" style="left:323.00px;top:3.30px;letter-spacing:-0.342px;color:#ffffff;">CardFiles</span>
<span class="t" style="left:390.00px;top:3.30px;letter-spacing:0.019px;color:#ffffff;">Items</span>
<span class="t" style="left:440.00px;top:3.30px;letter-spacing:-0.303px;color:#ffffff;">Stock</span>
<span class="t" style="left:489.00px;top:3.30px;letter-spacing:-0.219px;color:#ffffff;">Accounts</span>
<span class="t" style="left:556.00px;top:3.30px;letter-spacing:-0.222px;color:#ffffff;">Management</span>
<span class="t" style="left:641.00px;top:3.30px;letter-spacing:-0.203px;color:#ffffff;">Dashboard</span>
<span class="t" style="left:716.00px;top:3.30px;letter-spacing:-0.444px;color:#ffffff;">Scheduling</span>
<span class="t" style="left:789.50px;top:3.30px;letter-spacing:-0.603px;color:#ffffff;">Email</span>
<span class="t" style="left:836.50px;top:3.30px;letter-spacing:-0.363px;color:#ffffff;">eBusiness</span>
<span class="t" style="left:907.00px;top:3.30px;letter-spacing:-0.349px;color:#ffffff;">Documents</span>
<span class="t" style="left:983.00px;top:3.30px;letter-spacing:-0.237px;color:#ffffff;">Tools</span>
<span class="t" style="left:138.00px;top:3.30px;letter-spacing:-0.438px;color:#0a0a0a;">Jobs</span>
<span class="t" style="left:73.00px;top:88.70px;letter-spacing:-0.438px;color:#333333;">Jobs</span>
<span class="t" style="left:238.00px;top:88.70px;letter-spacing:-0.231px;color:#333333;">Jobs Other</span>
<span class="t" style="left:366.75px;top:88.70px;letter-spacing:-0.121px;color:#333333;">Unprints</span>
<span class="t" style="left:448.25px;top:88.70px;letter-spacing:-0.225px;color:#333333;">Actions</span>
<span class="t" style="left:521.25px;top:88.70px;letter-spacing:-0.355px;color:#333333;">Pick / Pack</span>
<span class="t" style="left:583.75px;top:88.70px;letter-spacing:-0.310px;color:#333333;">Email Actions</span>
<span class="t" style="left:754.00px;top:88.70px;letter-spacing:-0.218px;color:#333333;">Job List Reports</span>
<span class="t" style="left:938.75px;top:88.70px;letter-spacing:-0.232px;color:#333333;">Scripts</span>
<span class="t" style="left:13.00px;top:60.70px;letter-spacing:-0.526px;color:#303030;">Add</span>
<span class="t" style="left:14.00px;top:73.70px;letter-spacing:-0.417px;color:#303030;">Job</span>
<span class="t" style="left:52.00px;top:60.70px;letter-spacing:-0.184px;color:#303030;">View/Edit</span>
<span class="t" style="left:65.50px;top:73.70px;letter-spacing:-0.417px;color:#303030;">Job</span>
<span class="t" style="left:119.00px;top:60.70px;letter-spacing:-0.172px;color:#303030;">Create</span>
<span class="t" style="left:112.50px;top:73.70px;letter-spacing:-0.365px;color:#303030;">Job List</span>
<span class="t" style="left:181.00px;top:60.70px;letter-spacing:-0.205px;color:#303030;">Return From</span>
<span class="t" style="left:188.00px;top:73.70px;letter-spacing:-0.273px;color:#303030;">Customer</span>
<span class="t" style="left:370.00px;top:60.70px;letter-spacing:-0.067px;color:#303030;">Unprint</span>
<span class="t" style="left:663.00px;top:60.70px;letter-spacing:-0.196px;color:#303030;">Preview</span>
<span class="t" style="left:270.75px;top:25.70px;letter-spacing:-0.307px;color:#303030;">Sales Register</span>
<span class="t" style="left:270.75px;top:47.70px;letter-spacing:-0.318px;color:#303030;">Dispatch</span>
<span class="t" style="left:270.75px;top:69.70px;letter-spacing:-0.239px;color:#ababab;">Payment</span>
<span class="t" style="left:441.25px;top:25.70px;letter-spacing:-0.173px;color:#303030;">Invoice Job</span>
<span class="t" style="left:742.50px;top:25.70px;letter-spacing:-0.005px;color:#303030;">Report</span>
<span class="t" style="left:746.00px;top:46.70px;letter-spacing:-0.232px;color:#3c3c3c;width:165.5px;overflow:hidden;">Toner Picking Slip - Wodonga Branc</span>
<span class="t" style="left:9.00px;top:110.70px;letter-spacing:-0.376px;color:#bdbdbd;">Search Jim2</span>
<span class="t" style="left:11.00px;top:134.70px;letter-spacing:-0.080px;color:#3a3a3a;">Nav Tree</span>
<span class="t" style="left:176.00px;top:134.70px;letter-spacing:-0.072px;color:#3a3a3a;">Count</span>
<span class="t" style="left:28.50px;top:153.70px;letter-spacing:-0.245px;color:#111111;">Quotes</span>
<span class="t" style="left:28.50px;top:172.70px;letter-spacing:-0.312px;color:#111111;">Jobs</span>
<span class="t" style="left:28.50px;top:267.70px;letter-spacing:-0.332px;color:#111111;">Purchases</span>
<span class="t" style="left:28.50px;top:286.70px;letter-spacing:-0.385px;color:#111111;">Machines</span>
<span class="t" style="left:28.50px;top:305.70px;letter-spacing:-0.342px;color:#111111;">CardFiles</span>
<span class="t" style="left:28.50px;top:324.70px;letter-spacing:0.019px;color:#111111;">Items</span>
<span class="t" style="left:28.50px;top:343.70px;letter-spacing:-0.303px;color:#111111;">Stock</span>
<span class="t" style="left:28.50px;top:362.70px;letter-spacing:-0.219px;color:#111111;">Accounts</span>
<span class="t" style="left:28.50px;top:381.70px;letter-spacing:-0.222px;color:#111111;">Management</span>
<span class="t" style="left:28.50px;top:400.70px;letter-spacing:-0.203px;color:#111111;">Dashboard</span>
<span class="t" style="left:28.50px;top:419.70px;letter-spacing:-0.444px;color:#111111;">Scheduling</span>
<span class="t" style="left:28.50px;top:438.70px;letter-spacing:-0.603px;color:#111111;">Email</span>
<span class="t" style="left:71.00px;top:191.70px;letter-spacing:-0.120px;color:#111111;">202331</span>
<span class="t" style="left:174.00px;top:191.70px;letter-spacing:-0.177px;color:#111111;">FINISH</span>
<span class="t" style="left:71.00px;top:210.70px;letter-spacing:-0.120px;color:#111111;">202332</span>
<span class="t" style="left:174.00px;top:210.70px;letter-spacing:-0.177px;color:#111111;">FINISH</span>
<span class="t" style="left:71.00px;top:229.70px;letter-spacing:-0.120px;color:#111111;">202334</span>
<span class="t" style="left:174.00px;top:229.70px;letter-spacing:-0.177px;color:#111111;">FINISH</span>
<span class="t" style="left:71.00px;top:248.70px;letter-spacing:-0.250px;color:#0a0af0;">List1</span>
<span class="t" style="left:176.00px;top:248.70px;letter-spacing:-0.276px;color:#0a0af0;">2</span>
<span class="t" style="left:246.00px;top:111.80px;letter-spacing:-0.010px;color:#ffffff;font-weight:bold;font-size:13px;">Job List - 1</span>
<span class="t" style="left:241.50px;top:132.70px;letter-spacing:0.335px;color:#000000;">Job#</span>
<span class="t" style="left:241.50px;top:155.70px;letter-spacing:-0.100px;color:#000000;">Cust <u>R</u>ef</span>
<span class="t" style="left:241.50px;top:178.70px;letter-spacing:0.676px;color:#000000;">Inv#</span>
<span class="t" style="left:417.50px;top:132.70px;letter-spacing:0.050px;color:#000000;"><u>C</u>ust#</span>
<span class="t" style="left:417.50px;top:155.70px;letter-spacing:-0.056px;color:#000000;"><u>F</u>rom#</span>
<span class="t" style="left:417.50px;top:178.70px;letter-spacing:-0.228px;color:#000000;">Ship#</span>
<span class="t" style="left:579.00px;top:132.70px;letter-spacing:-0.115px;color:#000000;"><u>S</u>tatus</span>
<span class="t" style="left:579.00px;top:155.70px;letter-spacing:-0.092px;color:#000000;"><u>P</u>riority</span>
<span class="t" style="left:579.00px;top:178.70px;letter-spacing:-0.090px;color:#000000;"><u>T</u>ype</span>
<span class="t" style="left:637.00px;top:132.70px;letter-spacing:-0.427px;color:#444444;">FINISH</span>
<span class="t" style="left:637.00px;top:178.70px;letter-spacing:-0.379px;color:#444444;">Copier Billing</span>
<span class="t" style="left:740.00px;top:132.70px;letter-spacing:-0.836px;color:#000000;"><u>N</u>ame</span>
<span class="t" style="left:740.00px;top:155.70px;letter-spacing:-0.238px;color:#000000;">Acc. <u>M</u>gr</span>
<span class="t" style="left:241.50px;top:201.70px;letter-spacing:-0.102px;color:#b0b0b0;">Item</span>
<span class="t" style="left:241.50px;top:224.70px;letter-spacing:0.397px;color:#000000;">Item#</span>
<span class="t" style="left:417.50px;top:224.70px;letter-spacing:-0.107px;color:#000000;">Seri<u>a</u>l#</span>
<span class="t" style="left:241.50px;top:247.70px;letter-spacing:-0.477px;color:#000000;">Make</span>
<span class="t" style="left:417.50px;top:247.70px;letter-spacing:-0.394px;color:#000000;">Model</span>
<span class="t" style="left:579.00px;top:247.70px;letter-spacing:-0.346px;color:#000000;">Groups</span>
<span class="t" style="left:769.00px;top:248.20px;letter-spacing:-1.000px;color:#828282;">OR</span>
<span class="t" style="left:241.50px;top:270.70px;letter-spacing:-0.393px;color:#000000;">Branch</span>
<span class="t" style="left:417.50px;top:270.70px;letter-spacing:-0.438px;color:#000000;">SubBranch</span>
<span class="t" style="left:579.00px;top:270.70px;letter-spacing:-0.295px;color:#000000;">GL Dept</span>
<span class="t" style="left:858.00px;top:203.00px;letter-spacing:-0.633px;color:#3c3c3c;">Sale</span>
<span class="t" style="left:842.50px;top:226.00px;letter-spacing:-0.241px;color:#3c3c3c;">Service</span>
<span class="t" style="left:808.50px;top:249.00px;letter-spacing:-0.055px;color:#3c3c3c;">Manufacturing</span>
<span class="t" style="left:967.80px;top:134.00px;letter-spacing:-0.078px;color:#058205;">Active</span>
<span class="t" style="left:969.80px;top:157.00px;letter-spacing:-0.307px;color:#058205;">Finish</span>
<span class="t" style="left:966.30px;top:180.00px;letter-spacing:-0.159px;color:#f01428;">Ready</span>
<span class="t" style="left:973.30px;top:203.00px;letter-spacing:0.219px;color:#3c3c3c;">Inv&#x27;d</span>
<span class="t" style="left:935.30px;top:226.00px;letter-spacing:-0.387px;color:#3c3c3c;">Unread Email</span>
<span class="t" style="left:951.30px;top:249.00px;letter-spacing:-0.135px;color:#3c3c3c;">Reserved</span>
<span class="t" style="left:242.00px;top:293.70px;letter-spacing:-0.385px;color:#b0b0b0;">Machines</span>
<span class="t" style="left:241.50px;top:317.70px;letter-spacing:-0.088px;color:#000000;">Machine#</span>
<span class="t" style="left:417.50px;top:317.70px;letter-spacing:0.053px;color:#000000;">Contract</span>
<span class="t" style="left:579.00px;top:317.70px;letter-spacing:-0.090px;color:#000000;">Type</span>
<span class="t" style="left:739.50px;top:317.70px;letter-spacing:0.179px;color:#000000;">Master#</span>
<span class="t" style="left:241.50px;top:340.70px;letter-spacing:-0.346px;color:#000000;">Groups</span>
<span class="t" style="left:879.00px;top:341.20px;letter-spacing:-1.000px;color:#828282;">OR</span>
<span class="t" style="left:247.50px;top:372.70px;letter-spacing:-0.091px;color:#b9b9b9;">Drag a column header here to group by that column</span>
<span class="t" style="left:266.00px;top:399.70px;letter-spacing:0.035px;color:#3a3a3a;">Job#</span>
<span class="t" style="left:315.50px;top:399.70px;letter-spacing:-0.088px;color:#3a3a3a;">Machine#</span>
<span class="t" style="left:381.75px;top:399.70px;letter-spacing:0.053px;color:#3a3a3a;">Contract</span>
<span class="t" style="left:469.00px;top:399.70px;letter-spacing:-0.115px;color:#3a3a3a;">Status</span>
<span class="t" style="left:555.75px;top:399.70px;letter-spacing:0.050px;color:#3a3a3a;">Cust#</span>
<span class="t" style="left:653.00px;top:399.70px;letter-spacing:-0.391px;color:#3a3a3a;">Customer Name</span>
<span class="t" style="left:778.00px;top:399.70px;letter-spacing:0.120px;color:#3a3a3a;">Cust Ref#</span>
<span class="t" style="left:875.00px;top:399.70px;letter-spacing:0.397px;color:#3a3a3a;">Item#</span>
<span class="t" style="left:980.00px;top:399.70px;letter-spacing:0.054px;color:#3a3a3a;">Item Desc</span>
<span class="t" style="left:266.00px;top:417.70px;letter-spacing:-0.120px;color:#111111;">202334</span>
<span class="t" style="left:316.75px;top:417.70px;letter-spacing:-0.371px;color:#111111;">1001</span>
<span class="t" style="left:381.75px;top:417.70px;letter-spacing:-0.443px;color:#111111;">Bk $0 Col No</span>
<span class="t" style="left:468.75px;top:417.70px;letter-spacing:-0.510px;color:#f01428;">FINISH</span>
<span class="t" style="left:555.75px;top:417.70px;letter-spacing:-0.072px;color:#111111;">C.873</span>
<span class="t" style="left:653.00px;top:417.70px;letter-spacing:-0.182px;color:#111111;">Customer number 873</span>
<span class="t" style="left:778.00px;top:417.70px;letter-spacing:-1.100px;color:#111111;">JANELLE</span>
<span class="t" style="left:875.00px;top:417.70px;letter-spacing:-0.526px;color:#111111;">TEST.ITEM</span>
<span class="t" style="left:980.00px;top:417.70px;letter-spacing:0.042px;color:#111111;">Test Item</span>
<span class="t" style="left:266.00px;top:435.70px;letter-spacing:-0.120px;color:#111111;">202326</span>
<span class="t" style="left:316.75px;top:435.70px;letter-spacing:-0.371px;color:#111111;">1001</span>
<span class="t" style="left:381.75px;top:435.70px;letter-spacing:-0.443px;color:#111111;">Bk $0 Col No</span>
<span class="t" style="left:468.75px;top:435.70px;letter-spacing:-0.510px;color:#f01428;">FINISH</span>
<span class="t" style="left:555.75px;top:435.70px;letter-spacing:-0.072px;color:#111111;">C.956</span>
<span class="t" style="left:653.00px;top:435.70px;letter-spacing:-0.182px;color:#111111;">Customer number 956</span>
<span class="t" style="left:778.00px;top:435.70px;letter-spacing:-1.100px;color:#111111;">JANELLE</span>
<span class="t" style="left:875.00px;top:435.70px;letter-spacing:-0.526px;color:#111111;">TEST.ITEM</span>
<span class="t" style="left:980.00px;top:435.70px;letter-spacing:0.042px;color:#111111;">Test Item</span>
</body></html>
